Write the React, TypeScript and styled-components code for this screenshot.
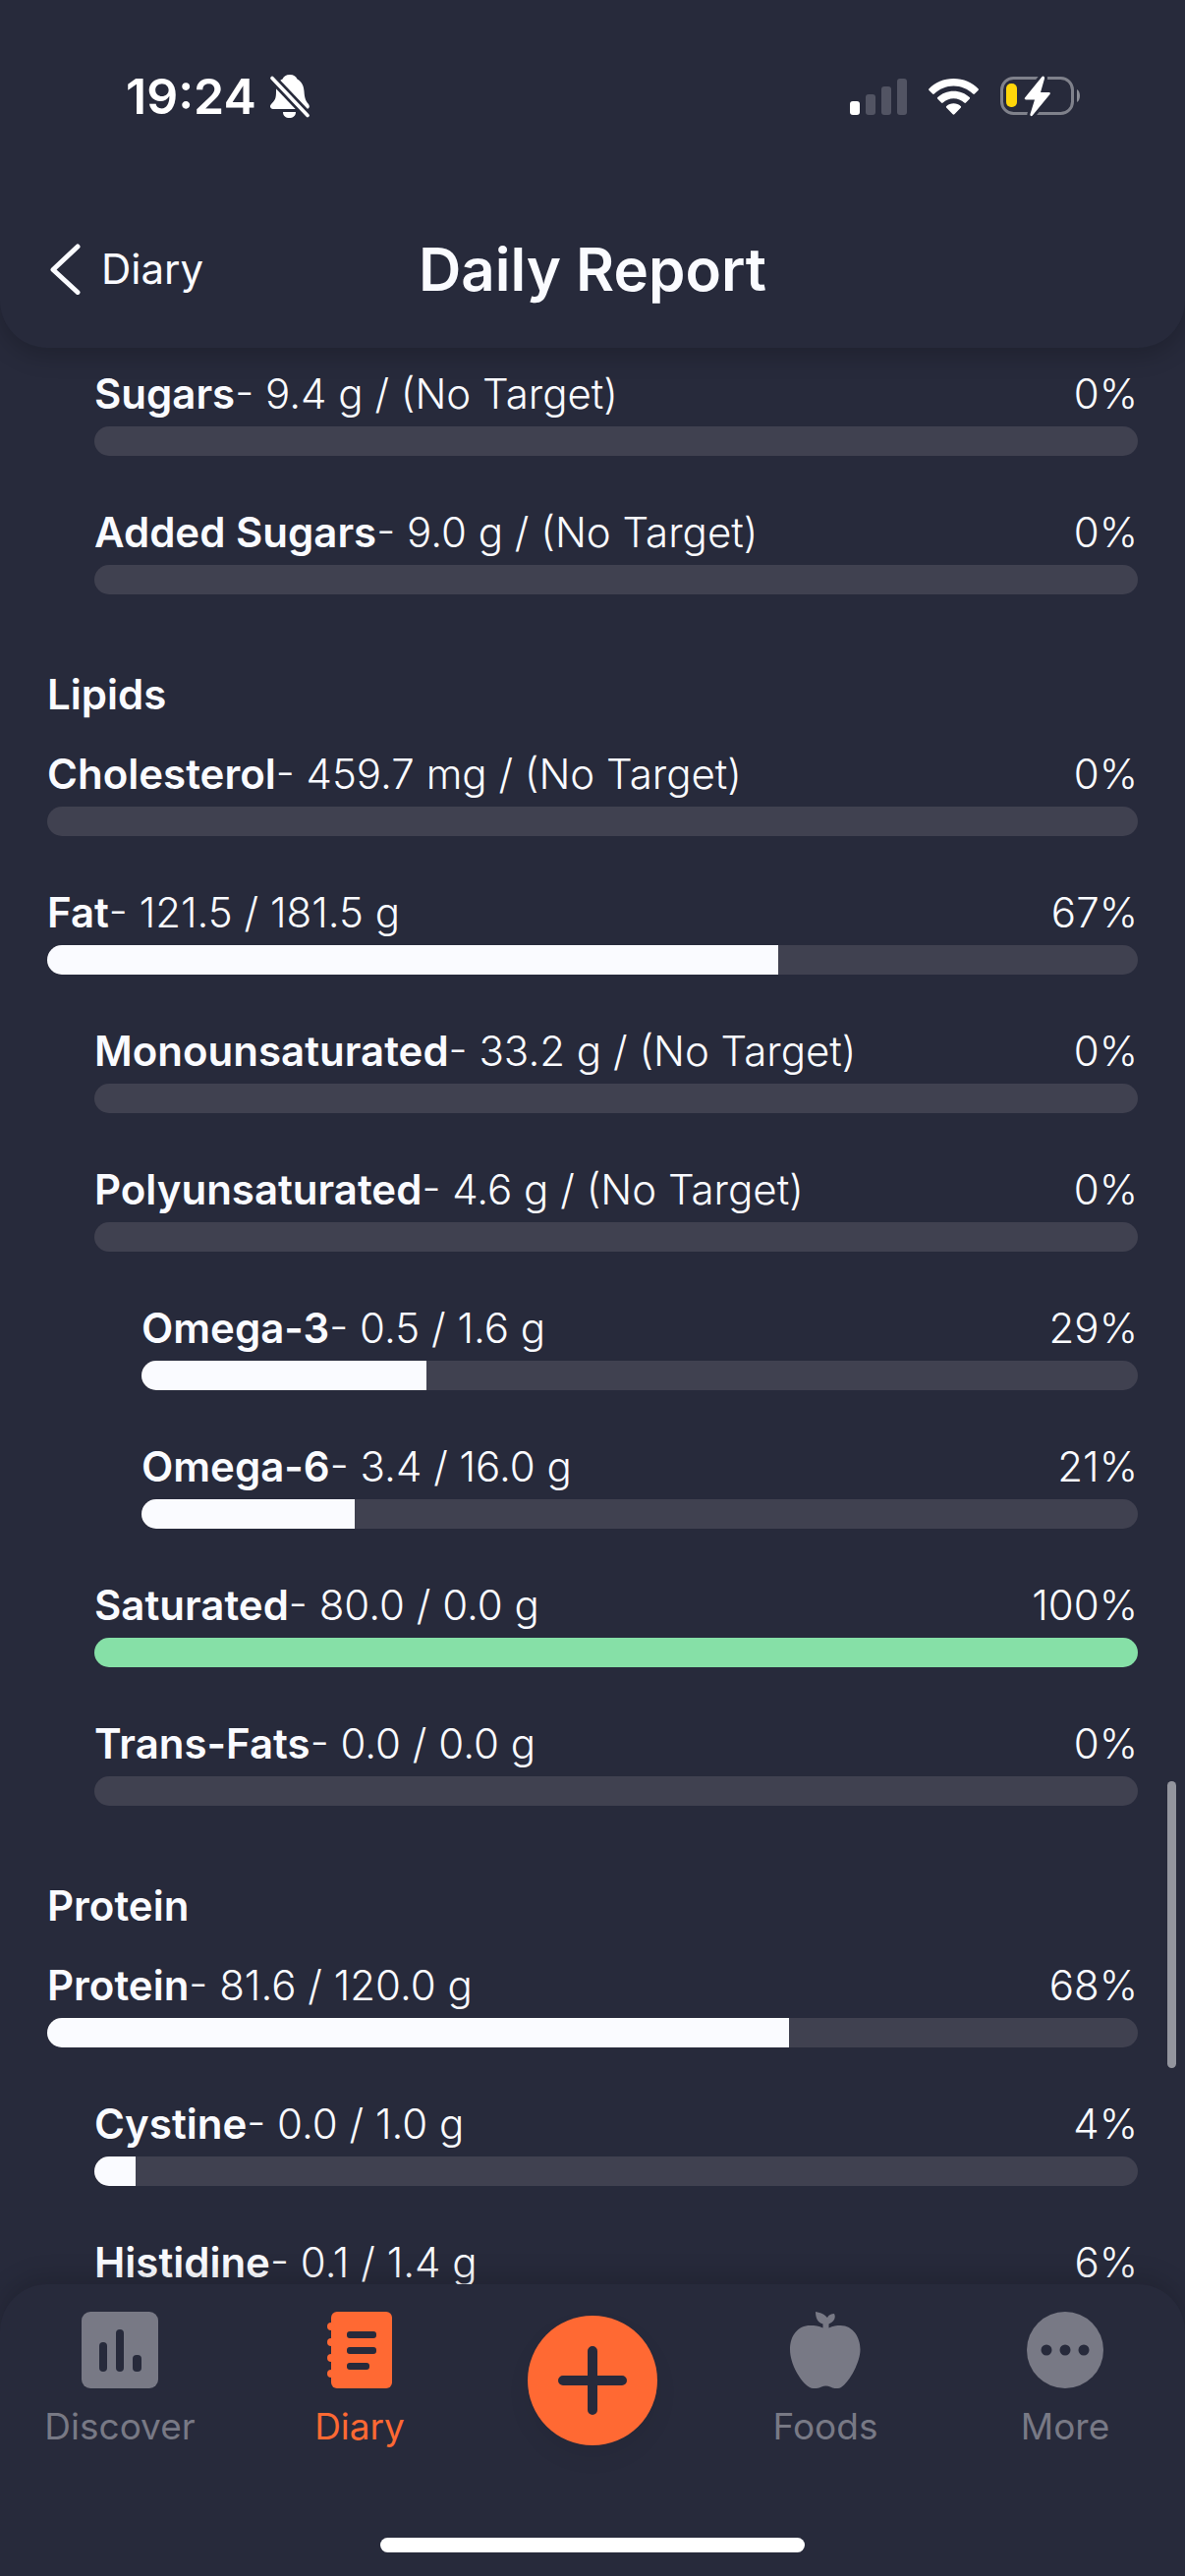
import React from 'react';
import styled, { createGlobalStyle } from 'styled-components';

const color = {
  background: '#272a3b',
  track: '#404150',
  text: '#fafbff',
  muted: '#787985',
  accent: '#ff6933',
  complete: '#86e0a7',
};

const GlobalStyle = createGlobalStyle`
  *, *::before, *::after { box-sizing: border-box; }
  body {
    margin: 0;
    background: ${color.background};
    color: ${color.text};
    font-family: Inter, "Noto Sans", sans-serif;
  }
`;

const Screen = styled.div`
  height: 100vh;
  display: grid;
  grid-template-rows: auto minmax(0, 1fr) auto;
  overflow: hidden;
`;

const Header = styled.header`
  position: relative;
  z-index: 1;
  background: ${color.background};
  border-radius: 0 0 48px 48px;
  box-shadow: 0 8px 24px rgba(0, 0, 0, 0.2);
  padding: 66px 48px 28px;
`;

const StatusBar = styled.div`
  display: flex;
  justify-content: space-between;
  align-items: center;
  height: 64px;
  padding: 0 58px 0 80px;
  color: #ffffff;
`;

const StatusGroup = styled.div<{ $gap: number }>`
  display: flex;
  align-items: center;
  gap: ${(p) => p.$gap}px;
`;

const Clock = styled.time`
  font-size: 50px;
  font-weight: 600;
  line-height: 64px;
`;

const NavBar = styled.nav`
  display: grid;
  grid-template-columns: 1fr auto 1fr;
  align-items: center;
  height: 104px;
  margin-top: 92px;
`;

const BackButton = styled.button`
  display: flex;
  align-items: center;
  justify-self: start;
  gap: 18px;
  padding: 0;
  border: 0;
  background: none;
  color: inherit;
  font: 400 42px/56px Inter, "Noto Sans", sans-serif;
  cursor: pointer;
`;

const Title = styled.h1`
  margin: 0;
  font-size: 60px;
  font-weight: 600;
  line-height: 72px;
`;

const Body = styled.div`
  position: relative;
  min-height: 0;
`;

const Report = styled.main`
  height: 100%;
  overflow-y: auto;
  padding: 25px 48px 0;
  scrollbar-width: none;
`;

const ScrollThumb = styled.div`
  position: absolute;
  top: 74%;
  right: 9px;
  width: 9px;
  height: 292px;
  border-radius: 5px;
  background: #93959e;
`;

const SectionTitle = styled.h2`
  margin: 0;
  padding: 24px 0 37px;
  font-size: 42px;
  font-weight: 600;
  line-height: 44px;
`;

const Nutrient = styled.div<{ $level: number }>`
  margin: 0 0 56px ${(p) => p.$level * 48}px;
`;

const NutrientLine = styled.div`
  display: flex;
  justify-content: space-between;
  margin-bottom: 11px;
  font-size: 42px;
  font-weight: 300;
  line-height: 44px;
  white-space: nowrap;
`;

const NutrientName = styled.strong`
  font-weight: 600;
`;

const Track = styled.div`
  height: 30px;
  border-radius: 15px;
  background: ${color.track};
  overflow: hidden;
`;

const Fill = styled.div<{ $complete: boolean }>`
  height: 100%;
  background: ${(p) => (p.$complete ? color.complete : color.text)};
`;

const Footer = styled.footer`
  position: relative;
  z-index: 1;
  background: ${color.background};
  border-radius: 48px 48px 0 0;
  box-shadow: 0 -8px 24px rgba(0, 0, 0, 0.15);
  padding: 28px 0 24px;
`;

const Tabs = styled.nav`
  display: grid;
  grid-template-columns: 1fr 1fr 230px 1fr 1fr;
  align-items: start;
  justify-items: center;
  height: 230px;
`;

const Tab = styled.a<{ $active?: boolean }>`
  display: flex;
  flex-direction: column;
  align-items: center;
  gap: 17px;
  color: ${(p) => (p.$active ? color.accent : color.muted)};
  font-size: 37px;
  font-weight: 400;
  line-height: 44px;
  text-decoration: none;
`;

const AddButton = styled.button`
  display: grid;
  place-items: center;
  width: 132px;
  height: 132px;
  margin-top: 4px;
  padding: 0;
  border: 0;
  border-radius: 50%;
  background: ${color.accent};
  box-shadow: 0 12px 24px rgba(0, 0, 0, 0.06);
  cursor: pointer;
`;

const HomeIndicator = styled.div`
  width: 432px;
  height: 15px;
  margin: 0 auto;
  border-radius: 8px;
  background: #ffffff;
`;

const BellOff = () => (
  <svg width="40" height="44" viewBox="0 0 40 44" aria-label="Silent mode">
    <path
      fill="#fff"
      d="M20 0c4 0 6 1.500 7.500 4.500C32 7 34 11 34.500 17c.5 7 1.500 9.500 4.500 13 1.500 2 1 5-2 5H3c-3 0-4-3-2-5 4-4 5-6 5-13 0-6 2-10.500 6.500-12.500C14 1.500 16 0 20 0zM13 38h13c0 4-3 6-6.500 6S13 42 13 38z"
    />
    <path d="M2 3.500l36 38" stroke={color.background} strokeWidth="9" />
    <path d="M2 3.500l36 38" stroke="#fff" strokeWidth="3.600" strokeLinecap="round" />
  </svg>
);

const Signal = () => (
  <svg width="58" height="37" viewBox="0 0 58 37" fill="#525463" aria-label="Signal">
    <rect y="23" width="10" height="14" rx="3" fill="#fff" />
    <rect x="16" y="16" width="10" height="21" rx="3" />
    <rect x="32" y="8" width="10" height="29" rx="3" />
    <rect x="48" width="10" height="37" rx="3" />
  </svg>
);

const Wifi = () => (
  <svg width="51" height="37" viewBox="0 0 51 37" fill="#fff" aria-label="Wi-Fi">
    <path d="M25.500 0C35.500 0 44.500 4 50.500 10.200c.6.6.6 1.200 0 1.800l-3.600 3.600c-.5.500-1.100.5-1.700 0C40 10.500 33 7.500 25.500 7.500S11 10.500 5.800 15.600c-.6.5-1.200.5-1.700 0L.5 12c-.6-.6-.6-1.200 0-1.800C6.500 4 15.500 0 25.500 0z" />
    <path d="M25.500 12.700c6.300 0 12 2.400 16.200 6.400.6.500.6 1.200 0 1.700l-3.700 3.700c-.5.500-1.100.5-1.700 0-2.800-2.600-6.600-4.200-10.800-4.200s-8 1.600-10.800 4.200c-.6.5-1.200.5-1.700 0l-3.700-3.700c-.6-.5-.6-1.200 0-1.700 4.200-4 9.900-6.400 16.200-6.400z" />
    <path d="M25.500 25.300c2.800 0 5.300 1 7.200 2.700.6.500.6 1.200 0 1.700l-6.300 6.500c-.6.600-1.200.6-1.800 0l-6.300-6.500c-.6-.5-.6-1.200 0-1.700 1.900-1.700 4.400-2.700 7.200-2.700z" />
  </svg>
);

const Battery = () => (
  <svg width="82" height="42" viewBox="0 0 82 42" aria-label="Battery charging">
    <rect x="1.500" y="2.500" width="72" height="36" rx="12" fill="none" stroke="#7f818b" strokeWidth="3" />
    <path d="M78 14c4 2 4 11 0 13z" fill="#8b8d96" />
    <rect x="6" y="8" width="11" height="24" rx="5" fill="#ffd60a" />
    <path
      d="M42.500 1L25 22.500c-.7 1 0 2 1 2h9L30.500 39c-.5 2 1.200 2.800 2.300 1.500L50.500 19c.7-1 .2-2-1-2H41L45 3c.4-2-1.300-3.300-2.500-2z"
      fill="#fff"
      stroke={color.background}
      strokeWidth="6"
      paintOrder="stroke"
    />
  </svg>
);

const Chevron = () => (
  <svg width="37" height="52" viewBox="0 0 37 52" aria-hidden="true">
    <path d="M31 3L6 26.500 31 49.500" fill="none" stroke="currentColor" strokeWidth="5" strokeLinecap="round" strokeLinejoin="round" />
  </svg>
);

const DiscoverIcon = () => (
  <svg width="78" height="78" viewBox="0 0 78 78" aria-hidden="true">
    <rect width="78" height="78" rx="9" fill="currentColor" />
    <g fill={color.background}>
      <rect x="18" y="31" width="8" height="30" rx="4" />
      <rect x="35" y="18" width="8" height="43" rx="4" />
      <rect x="52" y="44" width="9" height="17" rx="4" />
    </g>
  </svg>
);

const DiaryIcon = () => (
  <svg width="66" height="78" viewBox="0 0 66 78" aria-hidden="true">
    <g fill="currentColor">
      <rect x="4" width="62" height="78" rx="6" />
      <circle cx="4" cy="15" r="4" />
      <circle cx="4" cy="31" r="4" />
      <circle cx="4" cy="47" r="4" />
      <circle cx="4" cy="63" r="4" />
    </g>
    <g fill={color.background}>
      <rect x="20" y="20" width="30" height="7" rx="3" />
      <rect x="20" y="36" width="30" height="7" rx="3" />
      <rect x="20" y="52" width="23" height="7" rx="3" />
    </g>
  </svg>
);

const AppleIcon = () => (
  <svg width="72" height="78" viewBox="0 0 72 78" fill="currentColor" aria-hidden="true">
    <path d="M33.500 16.500v-4C28 11 26 6 26 0c6 1 9.500 3 12 6 1.500-3 4-4 7-4 2 4 0 8-5.500 10.500v4c4-2 8-2.500 12-2.500C64 14 71.500 26 71.500 38.500S61 71 52 77c-4 2-8 1-11-.5-3-1.200-6-1.200-9 0-3 1.500-8 2.500-12 .5C10 71 0 52.500 0 38.500S8 14 20.500 14c5 0 9 .5 13 2.500z" />
  </svg>
);

const MoreIcon = () => (
  <svg width="78" height="78" viewBox="0 0 78 78" aria-hidden="true">
    <circle cx="39" cy="39" r="39" fill="currentColor" />
    <g fill={color.background}>
      <circle cx="20" cy="39" r="5.500" />
      <circle cx="39" cy="39" r="5.500" />
      <circle cx="58" cy="39" r="5.500" />
    </g>
  </svg>
);

const PlusIcon = () => (
  <svg width="70" height="70" viewBox="0 0 70 70" aria-hidden="true">
    <path d="M35 5v60M5 35h60" stroke={color.background} strokeWidth="10" strokeLinecap="round" />
  </svg>
);

type NutrientData = {
  name: string;
  amount: string;
  percent: number;
  level: number;
  share?: number;
};

type Section = { title?: string; items: NutrientData[] };

const sections: Section[] = [
  {
    items: [
      { name: 'Sugars', amount: '9.4 g / (No Target)', percent: 0, level: 1 },
      { name: 'Added Sugars', amount: '9.0 g / (No Target)', percent: 0, level: 1 },
    ],
  },
  {
    title: 'Lipids',
    items: [
      { name: 'Cholesterol', amount: '459.7 mg / (No Target)', percent: 0, level: 0 },
      { name: 'Fat', amount: '121.5 / 181.5 g', percent: 67, level: 0 },
      { name: 'Monounsaturated', amount: '33.2 g / (No Target)', percent: 0, level: 1 },
      { name: 'Polyunsaturated', amount: '4.6 g / (No Target)', percent: 0, level: 1 },
      { name: 'Omega-3', amount: '0.5 / 1.6 g', percent: 29, level: 2, share: 28.6 },
      { name: 'Omega-6', amount: '3.4 / 16.0 g', percent: 21, level: 2, share: 21.4 },
      { name: 'Saturated', amount: '80.0 / 0.0 g', percent: 100, level: 1 },
      { name: 'Trans-Fats', amount: '0.0 / 0.0 g', percent: 0, level: 1 },
    ],
  },
  {
    title: 'Protein',
    items: [
      { name: 'Protein', amount: '81.6 / 120.0 g', percent: 68, level: 0 },
      { name: 'Cystine', amount: '0.0 / 1.0 g', percent: 4, level: 1 },
      { name: 'Histidine', amount: '0.1 / 1.4 g', percent: 6, level: 1 },
    ],
  },
];

const NutrientRow = ({ name, amount, percent, level, share = percent }: NutrientData) => (
  <Nutrient $level={level}>
    <NutrientLine>
      <span>
        <NutrientName>{name}</NutrientName>- {amount}
      </span>
      <span>{percent}%</span>
    </NutrientLine>
    <Track role="progressbar" aria-label={name} aria-valuenow={percent}>
      <Fill $complete={percent >= 100} style={{ width: `${share}%` }} />
    </Track>
  </Nutrient>
);

export default function App() {
  return (
    <Screen>
      <GlobalStyle />
      <Header>
        <StatusBar>
          <StatusGroup $gap={14}>
            <Clock>19:24</Clock>
            <BellOff />
          </StatusGroup>
          <StatusGroup $gap={22}>
            <Signal />
            <Wifi />
            <Battery />
          </StatusGroup>
        </StatusBar>
        <NavBar>
          <BackButton type="button">
            <Chevron />
            Diary
          </BackButton>
          <Title>Daily Report</Title>
        </NavBar>
      </Header>
      <Body>
        <Report>
          {sections.map((section, i) => (
            <section key={i}>
              {section.title && <SectionTitle>{section.title}</SectionTitle>}
              {section.items.map((item) => (
                <NutrientRow key={item.name} {...item} />
              ))}
            </section>
          ))}
        </Report>
        <ScrollThumb />
      </Body>
      <Footer>
        <Tabs>
          <Tab href="#discover">
            <DiscoverIcon />
            Discover
          </Tab>
          <Tab href="#diary" $active>
            <DiaryIcon />
            Diary
          </Tab>
          <AddButton type="button" aria-label="Add">
            <PlusIcon />
          </AddButton>
          <Tab href="#foods">
            <AppleIcon />
            Foods
          </Tab>
          <Tab href="#more">
            <MoreIcon />
            More
          </Tab>
        </Tabs>
        <HomeIndicator />
      </Footer>
    </Screen>
  );
}
